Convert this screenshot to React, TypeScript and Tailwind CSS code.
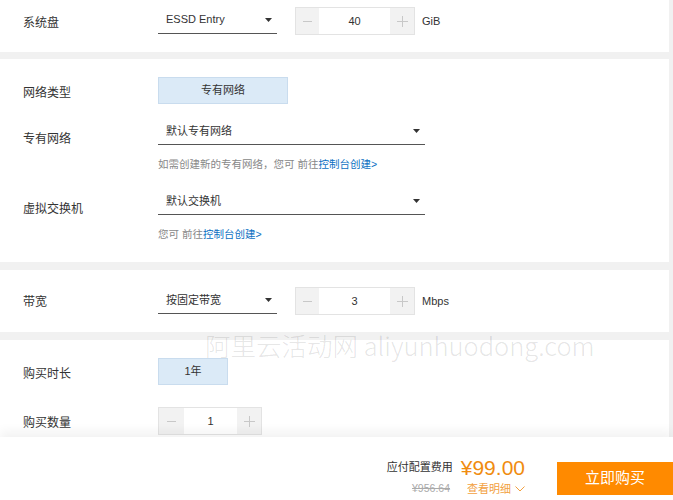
import React from 'react';

const font = { fontFamily: '"Liberation Sans", "Noto Sans CJK SC", sans-serif' };

const Caret = () => (
  <svg width="7" height="4" viewBox="0 0 7 4" className="shrink-0">
    <path d="M0 0 H7 L3.5 4 Z" fill="#333" />
  </svg>
);

const Select = ({ value, width }: { value: string; width: string }) => (
  <div className={`${width} h-[27px] flex items-center justify-between pl-[8px] pr-[5px] border-b border-[#555] text-[11px] text-[#333]`}>
    <span>{value}</span>
    <Caret />
  </div>
);

const Stepper = ({ value, small }: { value: string; small?: boolean }) => (
  <div className="flex h-[28px] border border-[#e3e3e3]">
    <div className={`${small ? 'w-[25px]' : 'w-[23px]'} bg-[#f2f2f2] flex items-center justify-center`}>
      <span className="block w-[9px] h-px bg-[#c8c8c8]" />
    </div>
    <div className={`${small ? 'w-[53px]' : 'w-[71px]'} bg-white flex items-center justify-center text-[11px] text-[#333]`}>{value}</div>
    <div className="w-[24px] bg-[#f2f2f2] flex items-center justify-center relative">
      <span className="block w-[11px] h-px bg-[#c8c8c8]" />
      <span className="absolute block w-px h-[11px] bg-[#c8c8c8]" />
    </div>
  </div>
);

const Label = ({ children, className = '' }: { children: React.ReactNode; className?: string }) => (
  <div className={`w-[135px] shrink-0 text-[12px] text-[#333] ${className}`}>{children}</div>
);

const Choice = ({ children, width }: { children: React.ReactNode; width: string }) => (
  <div className={`${width} h-[27px] bg-[#dbeaf7] border border-[#c9dcee] flex items-center justify-center text-[11px] text-[#333]`}>{children}</div>
);

const Card = ({ children, className = '' }: { children: React.ReactNode; className?: string }) => (
  <div className={`bg-white mr-[4px] pl-[23px] ${className}`}>{children}</div>
);

export default function App() {
  return (
    <div style={font} className="relative w-[673px] h-[500px] overflow-hidden bg-[#f1f1f1] flex flex-col">
      <Card className="h-[52px] pt-[7px]">
        <div className="flex items-center h-[28px]">
          <Label className="pt-[4px]">系统盘</Label>
          <div className="flex items-center -mt-[2px]">
            <Select value="ESSD Entry" width="w-[119px]" />
          </div>
          <div className="ml-[18px]">
            <Stepper value="40" />
          </div>
          <span className="ml-[7px] text-[11px] text-[#333]">GiB</span>
        </div>
      </Card>

      <Card className="mt-[7px] h-[203px] pt-[18px]">
        <div className="flex items-center h-[27px]">
          <Label className="pt-[5px]">网络类型</Label>
          <Choice width="w-[130px]">专有网络</Choice>
        </div>
        <div className="flex items-start mt-[14px]">
          <Label className="mt-[12px]">专有网络</Label>
          <div>
            <Select value="默认专有网络" width="w-[267px]" />
            <div className="mt-[10px] text-[10.5px] leading-[18px] text-[#888]">
              如需创建新的专有网络，您可 前往<span className="text-[#0a6fc2]">控制台创建&gt;</span>
            </div>
          </div>
        </div>
        <div className="flex items-start mt-[15px]">
          <Label className="mt-[12px]">虚拟交换机</Label>
          <div>
            <Select value="默认交换机" width="w-[267px]" />
            <div className="mt-[10px] text-[10.5px] leading-[18px] text-[#888]">
              您可 前往<span className="text-[#0a6fc2]">控制台创建&gt;</span>
            </div>
          </div>
        </div>
      </Card>

      <Card className="mt-[8px] h-[62px] pt-[17px]">
        <div className="flex items-center h-[28px]">
          <Label className="pt-[2px]">带宽</Label>
          <div className="-mt-[1px]">
            <Select value="按固定带宽" width="w-[119px]" />
          </div>
          <div className="ml-[18px]">
            <Stepper value="3" />
          </div>
          <span className="ml-[7px] text-[11px] text-[#333]">Mbps</span>
        </div>
      </Card>

      <Card className="mt-[8px] flex-1 pt-[18px]">
        <div className="flex items-center h-[27px]">
          <Label className="pt-[4px]">购买时长</Label>
          <Choice width="w-[70px]">1年</Choice>
        </div>
        <div className="flex items-center mt-[22px] h-[28px]">
          <Label className="pt-[3px]">购买数量</Label>
          <Stepper value="1" small />
        </div>
      </Card>

      <div className="absolute left-0 right-0 bottom-0 h-[63px] bg-white shadow-[0_-6px_10px_rgba(0,0,0,0.05)] flex items-start justify-end">
        <div className="flex flex-col items-end mt-[17px]">
          <div className="flex items-center h-[26px]">
            <span className="text-[11px] text-[#333]">应付配置费用</span>
            <span className="ml-[8px] text-[21px] leading-none text-[#f08c10]">¥99.00</span>
          </div>
          <div className="flex items-center h-[18px]">
            <span className="text-[10.5px] text-[#aaa] line-through">¥956.64</span>
            <span className="ml-[17px] text-[11px] text-[#f2a040] flex items-center">
              查看明细
              <svg width="10" height="6" viewBox="0 0 10 6" className="ml-[4px]">
                <path d="M0.5 0.5 L5 5 L9.5 0.5" fill="none" stroke="#f2a040" strokeWidth="1" />
              </svg>
            </span>
          </div>
        </div>
        <div className="ml-[32px] mt-[25px] w-[116px] h-[33px] bg-[#ff8a00] flex items-center justify-center text-[15px] text-white">
          立即购买
        </div>
      </div>

      <div className="absolute left-[205px] top-[330px] text-[25.5px] leading-[30px] text-black/[0.11] whitespace-nowrap pointer-events-none" style={{ fontFamily: '"Noto Sans CJK SC", "Noto Sans", sans-serif', fontWeight: 300 }}>
        阿里云活动网 aliyunhuodong.com
      </div>
    </div>
  );
}
